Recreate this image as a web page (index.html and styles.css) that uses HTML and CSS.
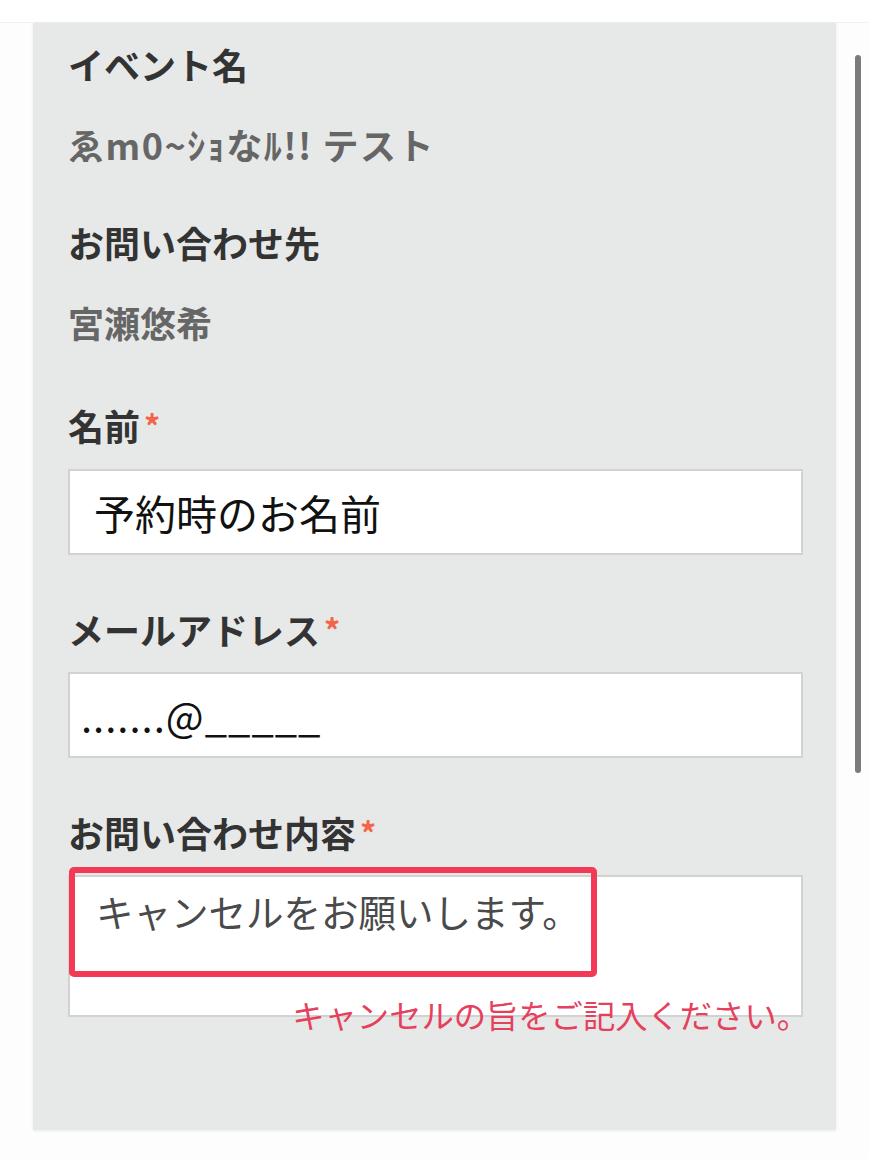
FILE: index.html
```html
<!DOCTYPE html>
<html lang="ja">
<head>
    <meta charset="UTF-8">
    <meta name="viewport" content="width=device-width, initial-scale=1.0">
    <title>お問い合わせ</title>
    <link rel="stylesheet" href="styles.css">
</head>
<body>

    <div class="topbar"></div>

    <form class="panel">
        <div class="label">イベント名</div>
        <div class="value event">ゑm0~ｼｮなﾙ!! テスト</div>

        <div class="label gap">お問い合わせ先</div>
        <div class="value">宮瀬悠希</div>

        <label class="label gap-lg" for="name">名前<span class="req">*</span></label>
        <input class="field name" id="name" type="text" value="予約時のお名前">

        <label class="label gap" for="mail">メールアドレス<span class="req">*</span></label>
        <input class="field mail" id="mail" type="text" value=".......@_____">

        <label class="label gap" for="body">お問い合わせ内容<span class="req">*</span></label>
        <div class="area-wrap">
            <textarea class="field area" id="body">キャンセルをお願いします。</textarea>
            <div class="highlight"></div>
        </div>
        <div class="error">キャンセルの旨をご記入ください。</div>
    </form>

    <div class="scrollbar"></div>

</body>
</html>
```

FILE: styles.css
```css
body {
    margin: 0;
    padding: 0;
    background-color: #fdfdfd;
    font-family: 'Noto Sans CJK JP', 'Noto Sans', sans-serif;
    height: 1159px;
    overflow: hidden;
}
.topbar {
    height: 22px;
    background-color: #ffffff;
    border-bottom: 1px solid #f0f0f0;
}
.panel {
    display: flex;
    flex-direction: column;
    align-items: flex-start;
    width: 733px;
    height: 1090px;
    margin-left: 33px;
    padding: 17px 35px 0 35px;
    background-color: #e7e9e8;
    box-shadow: 0 1px 3px rgba(0, 0, 0, 0.08);
}
.label {
    font-size: 36px;
    line-height: 48px;
    font-weight: 700;
    color: #333333;
}
.label.gap {
    margin-top: 50px;
}
.label.gap-lg {
    margin-top: 55px;
}
.req {
    font-size: 32px;
    font-weight: 700;
    color: #f2654a;
    margin-left: 4px;
    vertical-align: 2px;
}
.value {
    margin-top: 32px;
    font-size: 36px;
    line-height: 48px;
    font-weight: 700;
    color: #666666;
}
.value.event {
    letter-spacing: 1.5px;
}
.field {
    box-sizing: border-box;
    width: 735px;
    margin: 0;
    margin-top: 17px;
    border: 2px solid #d2d2d2;
    border-radius: 0;
    background-color: #ffffff;
    font-family: 'Noto Sans CJK JP', sans-serif;
    font-size: 40px;
    color: #111111;
    outline: none;
}
.name {
    height: 86px;
    margin-top: 20px;
    padding: 0 0 0 24px;
    font-size: 41px;
}
.mail {
    height: 86px;
    margin-top: 19px;
    padding: 0 0 0 11px;
    letter-spacing: 1px;
}
.area-wrap {
    position: relative;
    margin-top: 19px;
}
.area {
    display: block;
    height: 142px;
    margin-top: 0;
    padding: 9px 0 0 26px;
    font-size: 37.5px;
    line-height: 50px;
    color: #4a4a4a;
    resize: none;
}
/* annotation box drawn over the textarea */
.highlight {
    position: absolute;
    left: 1px;
    top: -8px;
    width: 516px;
    height: 98px;
    border: 6px solid #f23a57;
    border-radius: 5px;
}
.error {
    position: relative;
    align-self: stretch;
    margin-top: -23px;
    margin-right: -8px;
    text-align: right;
    font-size: 32.3px;
    line-height: 40px;
    color: #e6405c;
}
.scrollbar {
    position: absolute;
    left: 855px;
    top: 55px;
    width: 6px;
    height: 718px;
    border-radius: 3px;
    background-color: #7b7b7b;
}
```
